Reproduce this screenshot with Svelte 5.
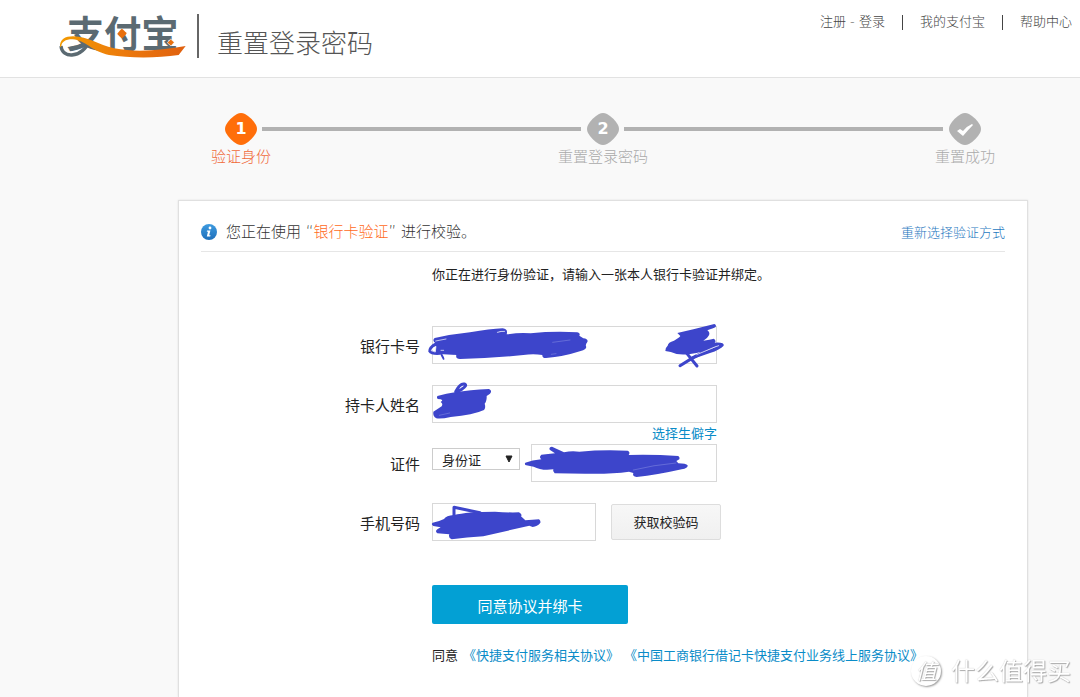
<script lang="ts">
  interface Step {
    mark: string;
    label: string;
  }

  const navLinks = ['我的支付宝', '帮助中心'];

  const steps: Step[] = [
    { mark: '1', label: '验证身份' },
    { mark: '2', label: '重置登录密码' },
    { mark: '', label: '重置成功' },
  ];

  const agreements = ['《快捷支付服务相关协议》', '《中国工商银行借记卡快捷支付业务线上服务协议》'];

  let current = $state(0);
  let cardNumber = $state('');
  let holder = $state('');
  let idType = $state('身份证');
  let idNumber = $state('');
  let phone = $state('');
</script>

<div class="page">
  <header class="header">
    <a class="logo" href="#home" aria-label="支付宝">
      <svg width="132" height="60" viewBox="54 0 396 180">
        <defs>
          <linearGradient id="swoosh" x1="0" x2="1">
            <stop offset="0" stop-color="#f39a00" />
            <stop offset="0.5" stop-color="#ec7a0c" />
            <stop offset="1" stop-color="#e0600f" />
          </linearGradient>
        </defs>
        <text class="logo-text" x="80" y="144">支付宝</text>
        <path d="M63 138C65 158 80 166 96 165C120 164 140 143 152 118" fill="none" stroke="#5b6a72" stroke-width="10" />
        <path
          d="M60 142C58 118 76 109 99 109C145 109 175 135 222 145C300 160 370 148 437 138L416 165C350 175 270 175 207 165C157 155 135 120 98 118C75 118 65 126 64 139Z"
          fill="url(#swoosh)"
        />
        <path d="M245 86Q247 86 260 99Q261 101 247 115Q245 116 232 102Q231 100 245 86Z" fill="#e8700f" />
        <path d="M392 117L403 127L393 138L382 128Z" fill="#e8700f" stroke="#fff" stroke-width="2" />
      </svg>
    </a>
    <h1 class="title">重置登录密码</h1>
    <nav class="nav">
      <span><a href="#register">注册</a> - <a href="#login">登录</a></span>
      {#each navLinks as link}
        <span class="bar"></span>
        <a href="#nav">{link}</a>
      {/each}
    </nav>
  </header>

  <ol class="steps">
    {#each steps as step, i}
      {#if i > 0}
        <li class="line" aria-hidden="true"></li>
      {/if}
      <li class="step" class:active={i === current}>
        <span class="marker">
          <svg class="diamond" viewBox="0 0 32 32" width="32" height="32">
            <path d="M12 1Q16 -1 20 1Q27 5 31 12Q33 16 31 20Q27 27 20 31Q16 33 12 31Q5 27 1 20Q-1 16 1 12Q5 5 12 1Z" />
            {#if !step.mark}
              <path class="tick" d="M8 18L11 16L14 18Q18 13 23 11L24 12Q19 17 14 23Z" />
            {/if}
          </svg>
          <b>{step.mark}</b>
        </span>
        <span class="step-label">{step.label}</span>
      </li>
    {/each}
  </ol>

  <main class="card">
    <div class="card-head">
      <svg width="16" height="16" viewBox="0 0 16 16">
        <defs>
          <linearGradient id="info" x2="0" y2="1">
            <stop offset="0" stop-color="#3d9be0" />
            <stop offset="1" stop-color="#1f6fba" />
          </linearGradient>
        </defs>
        <circle cx="8" cy="8" r="8" fill="url(#info)" />
        <circle cx="9" cy="4" r="1.4" fill="#fff" />
        <path d="M6 6.6H9.4L8.2 11.2H9.6L9.2 12.4H5.8L7 7.8H5.8Z" fill="#fff" />
      </svg>
      <p class="notice">您正在使用 “<em>银行卡验证</em>” 进行校验。</p>
      <a class="reselect" href="#reselect">重新选择验证方式</a>
    </div>

    <p class="intro">你正在进行身份验证，请输入一张本人银行卡验证并绑定。</p>

    <form class="form" onsubmit={(e) => e.preventDefault()}>
      <div class="row">
        <label for="card-number">银行卡号</label>
        <div class="field wide">
          <input id="card-number" type="text" bind:value={cardNumber} />
          <svg class="ink" width="270" height="40" viewBox="276 51 810 120">
            <path d="M284 87Q340 75 390 70Q450 60 488 58Q505 60 500 76Q540 70 572 73Q640 66 712 70Q722 72 718 80L730 88Q746 90 742 99Q736 106 738 112Q742 120 722 126Q670 143 618 147Q606 147 607 138Q580 134 550 138Q450 148 360 150Q346 149 349 138L310 136Q275 142 265 128Q264 112 285 101Q276 94 284 87Z" />
            <path d="M305 138L311 149" class="stroke" />
            <path d="M287 96L318 90M274 124Q279 114 288 112L286 128ZM303 124H311M472 70Q484 66 494 67" class="gap" />
            <path d="M314 143L346 139L345 149L316 150Z" class="gap" />
            <path d="M638 100L690 93M634 136L648 134" class="scratch" />
          </svg>
          <svg class="ink" width="270" height="40" viewBox="-504 51 810 120">
            <path d="M232 72Q285 60 343 45Q350 48 347 54Q340 58 322 64Q332 72 326 80Q322 88 310 95Q330 92 342 89Q350 96 344 101Q374 99 371 110Q360 122 330 132L276 151L271 145L305 128Q260 140 230 135Q212 128 196 126Q194 118 203 110Q204 100 222 95Q240 84 241 81Z" />
            <path d="M261 134L291 171M240 170Q270 150 310 130" class="stroke thick" />
            <path d="M290 137L344 114L356 110" class="gap" />
          </svg>
        </div>
      </div>

      <div class="row">
        <label for="holder">持卡人姓名</label>
        <div class="field wide">
          <input id="holder" type="text" bind:value={holder} />
          <svg class="ink" width="270" height="40" viewBox="276 228 810 120">
            <path d="M292 261Q320 254 345 250Q390 243 447 240Q458 245 450 254L440 261Q441 276 434 284Q438 295 432 303Q400 318 332 324Q305 330 289 328Q278 322 280 308Q292 301 305 292Q310 284 302 279Q315 271 293 270Q289 266 292 261Z" />
            <path d="M347 248Q360 222 373 225Q384 228 365 241L352 248" class="stroke thick" />
            <path d="M298 319L329 312" class="scratch" />
          </svg>
          <a class="rare" href="#rare">选择生僻字</a>
        </div>
      </div>

      <div class="row">
        <label for="id-number">证件</label>
        <div class="select">
          <select aria-label="证件类型" bind:value={idType}>
            <option>身份证</option>
            <option>护照</option>
          </select>
          <svg width="8" height="8" viewBox="0 0 8 8"><path d="M1 1H7L4 7Z" fill="#222" stroke="#222" /></svg>
        </div>
        <div class="field id">
          <input id="id-number" type="text" bind:value={idNumber} />
          <svg class="ink" width="270" height="40" viewBox="63 45 810 120">
            <path d="M46 101Q66 94 94 91Q86 84 94 77L135 73L119 62Q116 54 126 53Q144 61 162 70Q185 64 208 68Q280 61 353 65Q362 69 356 78Q430 76 505 81Q511 86 508 91L499 96L505 103Q528 103 533 109Q534 118 515 121Q440 138 380 144Q366 142 370 132L357 128Q300 136 225 134L134 133Q127 127 130 121Q95 126 71 113L49 109Q42 106 46 101Z" />
            <path d="M370 123Q430 108 498 102" class="scratch" />
          </svg>
        </div>
      </div>

      <div class="row">
        <label for="phone">手机号码</label>
        <div class="field phone">
          <input id="phone" type="text" bind:value={phone} />
          <svg class="ink" width="270" height="40" viewBox="276 222 810 120">
            <path d="M278 281Q300 276 312 270Q318 260 342 258Q380 248 465 248Q500 251 537 250Q548 256 543 262L556 274Q578 272 597 271Q604 277 600 283Q592 293 578 294L568 290L430 322Q380 325 335 331Q324 326 328 316L292 313Q284 307 292 301L302 295L280 291Q272 286 278 281Z" />
            <path d="M342 260V235L420 251" class="stroke thick" />
          </svg>
        </div>
        <button type="button" class="code-btn">获取校验码</button>
      </div>

      <button type="submit" class="submit">同意协议并绑卡</button>

      <p class="agree">
        <span>同意</span>
        {#each agreements as item}
          <a href="#agreement">{item}</a>
        {/each}
      </p>
    </form>
  </main>

  <div class="watermark">
    <span class="seal">值</span>
    <span>什么值得买</span>
  </div>
</div>

<style>
  :global(body) {
    margin: 0;
    background: #f9f9f9;
  }

  .page {
    display: flex;
    flex-direction: column;
    min-height: 100vh;
    font-family: 'Noto Sans', 'Noto Sans CJK SC', sans-serif;
    font-size: 13px;
    line-height: 20px;
    color: #222;
  }

  a {
    color: #0a8cc8;
    text-decoration: none;
  }

  p,
  h1 {
    margin: 0;
  }

  .header {
    display: flex;
    align-items: flex-start;
    height: 77px;
    padding: 0 8px 0 58px;
    background: #fff;
    border-bottom: 1px solid #e2e2e2;
  }

  .logo svg {
    display: block;
    overflow: visible;
  }

  .logo-text {
    font-family: 'Noto Sans CJK SC', sans-serif;
    font-size: 112px;
    font-weight: 700;
    fill: #5b6a72;
  }

  .title {
    margin: 14px 0 0 7px;
    padding: 8px 0 0 18px;
    height: 36px;
    border-left: 2px solid #666;
    font-size: 26px;
    font-weight: 300;
    line-height: 42px;
    color: #555;
    white-space: nowrap;
  }

  .nav {
    display: flex;
    align-items: center;
    gap: 17px;
    margin: 12px 0 0 auto;
    font-family: 'DejaVu Sans', 'Noto Sans CJK SC', sans-serif;
    font-weight: 300;
    color: #444;
    white-space: nowrap;
  }

  .nav a {
    color: #444;
  }

  .bar {
    width: 1px;
    height: 15px;
    background: #444;
  }

  .steps {
    display: flex;
    margin: 35px 99px 0 225px;
    padding: 0;
    list-style: none;
  }

  .line {
    flex: 1;
    height: 4px;
    margin: 14px 6px 0 5px;
    background: #b2b2b2;
  }

  .step {
    display: flex;
    flex-direction: column;
    align-items: center;
    width: 32px;
    color: #aaa;
  }

  .step.active {
    color: #f0693a;
  }

  .marker {
    display: grid;
    place-items: center;
    width: 32px;
    height: 32px;
  }

  .diamond,
  .marker b {
    grid-area: 1 / 1;
  }

  .marker b {
    font-family: 'DejaVu Sans', sans-serif;
    font-size: 16px;
    color: #fff;
  }

  .diamond {
    fill: #b2b2b2;
  }

  .active .diamond {
    fill: #ff6e0a;
  }

  .tick {
    fill: #fff;
  }

  .step-label {
    font-size: 15px;
    font-weight: 300;
    line-height: 22px;
    white-space: nowrap;
  }

  .card {
    flex: 1;
    margin: 33px 52px 0 178px;
    padding: 12px 22px 0;
    background: #fff;
    border: 1px solid #e0e0e0;
    border-bottom: 0;
    box-shadow: 0 0 2px rgba(0, 0, 0, 0.1);
  }

  .card-head {
    display: flex;
    align-items: center;
    height: 38px;
    border-bottom: 1px solid #e6e6e6;
  }

  .notice {
    margin-left: 9px;
    font-family: 'DejaVu Sans', 'Noto Sans CJK SC', sans-serif;
    font-size: 15px;
    font-weight: 300;
    color: #333;
  }

  .notice em {
    font-style: normal;
    color: #ff6a22;
  }

  .reselect {
    margin-left: auto;
    font-weight: 300;
    color: #1f78c0;
  }

  .intro {
    margin: 12px 0 42px 231px;
  }

  .row {
    display: flex;
    height: 37px;
    margin-bottom: 22px;
  }

  label {
    width: 219px;
    margin-right: 12px;
    font-size: 15px;
    line-height: 40px;
    text-align: right;
  }

  .field {
    position: relative;
  }

  .wide {
    width: 285px;
  }

  .id {
    width: 186px;
    margin-left: 11px;
  }

  .phone {
    width: 164px;
  }

  input {
    display: block;
    box-sizing: border-box;
    width: 100%;
    height: 38px;
    padding: 0 10px;
    border: 1px solid #d8d8d8;
    background: #fff;
    font: inherit;
    font-size: 15px;
  }

  .ink {
    position: absolute;
    top: 0;
    left: 0;
    overflow: visible;
    pointer-events: none;
    fill: #3d45cb;
  }

  .stroke,
  .gap,
  .scratch {
    fill: none;
    stroke: #3d45cb;
    stroke-width: 6;
    stroke-linecap: round;
    stroke-linejoin: round;
  }

  .thick {
    stroke-width: 9;
  }

  .gap {
    fill: #fff;
    stroke: #fff;
    stroke-width: 2;
  }

  .scratch {
    stroke: #b4b8f0;
    stroke-width: 1;
  }

  .rare {
    display: block;
    line-height: 20px;
    text-align: right;
  }

  .select {
    position: relative;
    width: 88px;
    margin-top: 4px;
  }

  select {
    display: block;
    box-sizing: border-box;
    width: 100%;
    height: 22px;
    padding: 1px 9px 0;
    border: 1px solid #ccc;
    border-radius: 0;
    background: #fff;
    appearance: none;
    font: inherit;
    color: #222;
  }

  .select svg {
    position: absolute;
    top: 7px;
    right: 7px;
    pointer-events: none;
  }

  .code-btn {
    width: 110px;
    height: 36px;
    margin: 1px 0 0 15px;
    padding: 0;
    border: 1px solid #ddd;
    border-radius: 2px;
    background: linear-gradient(#f7f7f7, #f0f0f0);
    font: inherit;
    color: #222;
  }

  .submit {
    display: block;
    width: 196px;
    height: 39px;
    margin: 45px 0 21px 231px;
    padding: 3px 0 0;
    border: 0;
    border-radius: 2px;
    background: #03a0d4;
    font: inherit;
    font-size: 15px;
    color: #fff;
  }

  .agree {
    display: flex;
    gap: 5px;
    margin-left: 231px;
    white-space: nowrap;
  }

  .watermark {
    position: fixed;
    right: 9px;
    bottom: 11px;
    display: flex;
    align-items: center;
    gap: 10px;
    font-size: 24px;
    line-height: 30px;
    color: #fff;
    text-shadow: 1px 1px 1px #aaa, 0 0 1px #bbb;
    pointer-events: none;
  }

  .seal {
    width: 30px;
    height: 30px;
    border-radius: 50%;
    background: #fff;
    box-shadow: 1px 1px 2px #999;
    font-size: 21px;
    font-style: italic;
    text-align: center;
  }
</style>
